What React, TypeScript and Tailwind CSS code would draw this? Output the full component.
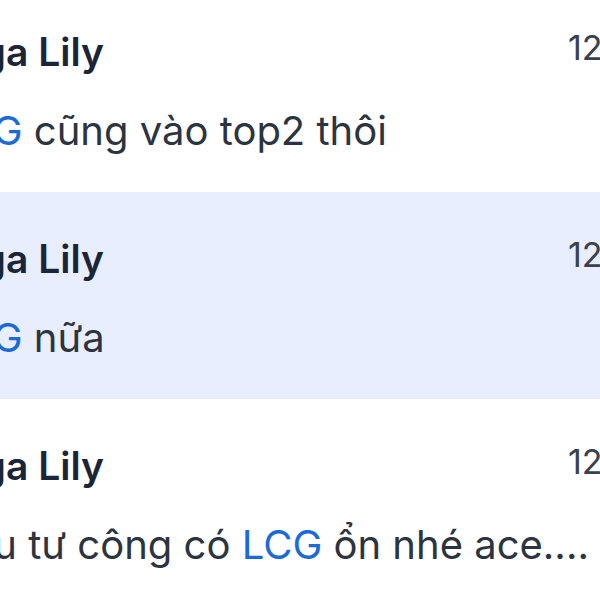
const rows = [
  { name: "Nga Lily", time: "12:41", pre: "LCG", rest: " cũng vào top2 thôi", active: false },
  { name: "Nga Lily", time: "12:38", pre: "LCG", rest: " nữa", active: true },
  { name: "Nga Lily", time: "12:30", lead: "Đầu tư công có ", pre: "LCG", rest: " ổn nhé ace....", active: false },
];

export default function App() {
  return (
    <div
      className="h-[600px] w-[600px] overflow-hidden bg-white"
      style={{ fontFamily: "Inter, 'Noto Sans', sans-serif" }}
    >
      <div className="-mt-[15px] flex flex-col">
        {rows.map((r, i) => (
          <div
            key={i}
            className={`flex h-[207px] pt-[43px] ${r.active ? "bg-[#e8eefd]" : "bg-white"}`}
          >
            <div className="-ml-[58px] flex min-w-0 flex-1 flex-col gap-[31px] whitespace-nowrap">
              <div className="ml-[10px] text-[39px] font-semibold leading-[48px] text-[#1b2537]">
                {r.name}
              </div>
              <div className="text-[40px] leading-[48px] text-[#2c3440]">
                {r.lead}
                <span className="text-[#1a6ad8]">{r.pre}</span>
                {r.rest}
              </div>
            </div>
            <div className="w-[32px] shrink-0 whitespace-nowrap text-[34px] leading-[40px] text-[#3a414c]">
              {r.time}
            </div>
          </div>
        ))}
      </div>
    </div>
  );
}
